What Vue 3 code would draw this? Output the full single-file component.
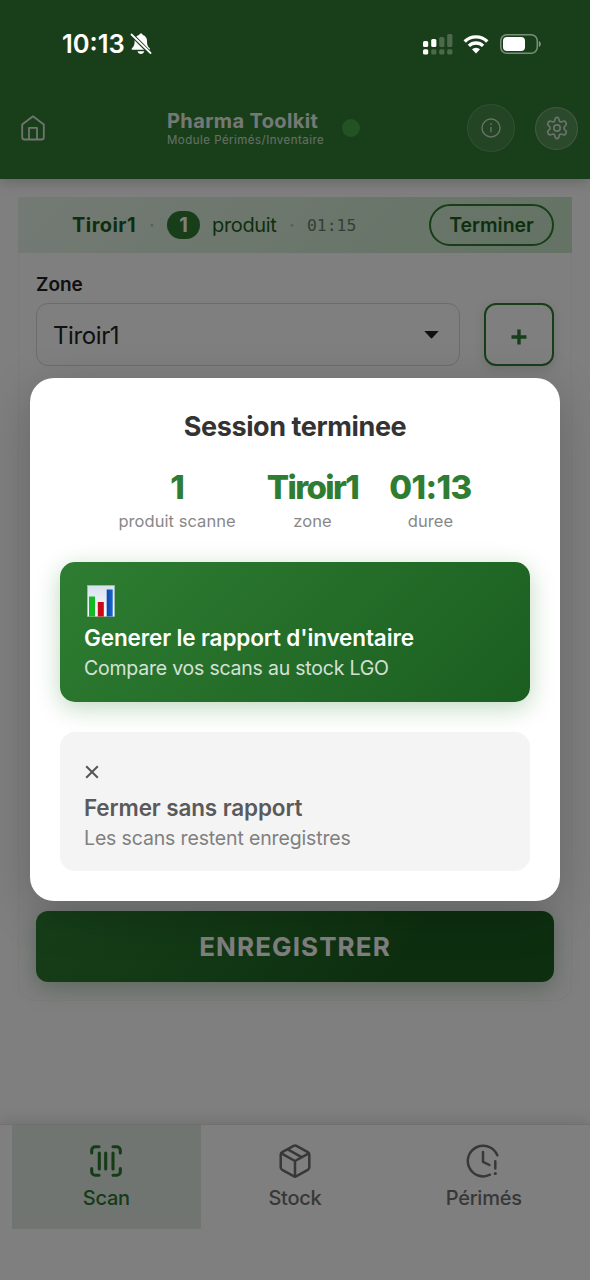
<script setup>
const stats = [
  { value: '1', label: 'produit scanne', kind: 'count' },
  { value: 'Tiroir1', label: 'zone', kind: 'zone' },
  { value: '01:13', label: 'duree', kind: 'time' },
]
</script>

<template>
  <div class="screen">
    <header class="header">
      <div class="status">
        <div class="status-left">
          <span class="clock">10:13</span>
          <svg class="bell" width="22" height="22" viewBox="0 0 22 22">
            <path fill="#fff" d="M11 .6c1 0 1.700.7 1.800 1.500 2.700.8 4.200 3 4.200 5.800 0 4.200 1 5.600 2.500 7 .8.800.5 1.900-.7 1.900H2.800c-1.300 0-1.600-1.100-.7-1.900 1.500-1.400 2.500-2.800 2.500-7 0-2.800 1.600-5 4.500-5.800C9.300 1.300 10 .6 11 .6zM7.500 18.300h6.800c-.5 1.700-1.800 2.700-3.400 2.700s-2.900-1-3.400-2.700z" />
            <path stroke="#193f1a" stroke-width="4" d="M0 0l22 22" />
            <path stroke="#fff" stroke-width="1.800" stroke-linecap="round" d="M1.500 1.500l19 18.500" />
          </svg>
        </div>
        <div class="status-right">
          <svg width="30" height="21" viewBox="0 0 30 21" fill="#fff">
            <rect x="0" y="7" width="5.200" height="6" rx="1.500" />
            <rect x="0" y="15.300" width="5.200" height="5.200" rx="1.500" />
            <rect x="8.200" y="5" width="5.200" height="8" rx="1.500" />
            <g opacity=".22">
              <rect x="16.200" y="3" width="5.200" height="10" rx="1.500" />
              <rect x="24.200" y="0" width="5.200" height="13" rx="1.500" />
              <rect x="8.200" y="15.300" width="5.200" height="5.200" rx="1.500" />
              <rect x="16.200" y="15.300" width="5.200" height="5.200" rx="1.500" />
              <rect x="24.200" y="15.300" width="5.200" height="5.200" rx="1.500" />
            </g>
          </svg>
          <svg class="wifi" width="26" height="20" viewBox="0 0 26 20" fill="none" stroke="#fff" stroke-width="3.300">
            <path d="M1.700 7.500a16 16 0 0 1 22.600 0" />
            <path d="M5.900 11.900a10.200 10.200 0 0 1 14.200 0" />
            <path fill="#fff" stroke="none" d="M13 19.500l-4-4.200a5.800 5.800 0 0 1 8 0z" />
          </svg>
          <svg class="battery" width="42" height="20" viewBox="0 0 42 20">
            <rect x=".75" y=".75" width="36.500" height="18.500" rx="6" fill="none" stroke="#fff" stroke-opacity=".42" stroke-width="1.500" />
            <rect x="3" y="3" width="22" height="14" rx="4" fill="#fff" />
            <path d="M38.800 7c1.300.5 2 1.600 2 3s-.7 2.500-2 3z" fill="#fff" fill-opacity=".45" />
          </svg>
        </div>
      </div>
      <div class="toolbar">
        <svg class="home" width="24" height="26" viewBox="0 0 24 26" fill="none" stroke="currentColor" stroke-width="1.800" stroke-linejoin="round">
          <path d="M1.200 9.500L12 1.300l10.800 8.200v12.700a2.300 2.300 0 0 1-2.300 2.300h-17a2.300 2.300 0 0 1-2.300-2.300z" />
          <path d="M8 24.500V12.800h8v11.700" />
        </svg>
        <div class="brand">
          <div class="brand-name">Pharma Toolkit</div>
          <div class="brand-sub">Module Périmés/Inventaire</div>
        </div>
        <span class="dot"></span>
        <span class="round info">
          <svg width="20" height="20" viewBox="0 0 20 20" fill="none" stroke="currentColor" stroke-width="1.400">
            <circle cx="10" cy="10" r="9" />
            <path d="M10 9v5.200M10 5.300v1.700" />
          </svg>
        </span>
        <span class="round gear">
          <svg width="22" height="24" viewBox="0 0 22 24" fill="none" stroke="currentColor" stroke-width="1.700" stroke-linejoin="round">
            <path d="M9.200 2.700a1.850 1.850 0 0 1 3.600 0l.45 1.700a1.800 1.800 0 0 0 2.500 1.400l1.600-.6a1.850 1.850 0 0 1 2.100.8l.6 1a1.850 1.850 0 0 1-.3 2.300l-1.200 1.200a2.100 2.100 0 0 0 0 3l1.200 1.200a1.850 1.850 0 0 1 .3 2.300l-.6 1a1.850 1.850 0 0 1-2.100.8l-1.600-.6a1.800 1.800 0 0 0-2.500 1.400l-.45 1.700a1.850 1.850 0 0 1-3.600 0l-.45-1.700a1.800 1.800 0 0 0-2.500-1.400l-1.600.6a1.850 1.850 0 0 1-2.100-.8l-.6-1a1.850 1.850 0 0 1 .3-2.300l1.200-1.200a2.100 2.100 0 0 0 0-3L2.250 9.300a1.850 1.850 0 0 1-.3-2.300l.6-1a1.850 1.850 0 0 1 2.100-.8l1.600.6a1.800 1.800 0 0 0 2.500-1.400z" />
            <circle cx="11" cy="12" r="3.200" />
          </svg>
        </span>
      </div>
    </header>

    <main class="main">
      <section class="session">
        <span class="session-zone">Tiroir1</span>
        <span class="sep">·</span>
        <span class="badge">1</span>
        <span class="session-unit">produit</span>
        <span class="sep sep-two">·</span>
        <span class="timer">01:15</span>
        <button class="finish">Terminer</button>
      </section>
      <section class="card">
        <div class="label">Zone</div>
        <div class="zone-row">
          <div class="select">
            <span>Tiroir1</span>
            <svg width="15" height="8" viewBox="0 0 15 8"><path d="M.3 0h14.400L8.300 7a1.100 1.100 0 0 1-1.600 0z" fill="#212121" /></svg>
          </div>
          <button class="add">
            <svg width="16" height="16" viewBox="0 0 16 16"><path d="M8 .5v15M.5 8h15" stroke="#2e7d32" stroke-width="3.400" /></svg>
          </button>
        </div>
        <button class="save">ENREGISTRER</button>
      </section>
    </main>

    <nav class="nav">
      <div class="tab active">
        <svg width="32" height="32" viewBox="0 0 32 32" fill="none" stroke="currentColor" stroke-width="3.100" stroke-linecap="round">
          <path d="M1.700 8V5.200a3.500 3.500 0 0 1 3.500-3.500H9M23 1.700h3.800a3.500 3.500 0 0 1 3.500 3.500V8M30.300 23.500v3.300a3.500 3.500 0 0 1-3.500 3.500H23M9 30.300H5.200a3.500 3.500 0 0 1-3.500-3.500v-3.300M9.300 8v16M15.700 8v16M23 8v16" />
        </svg>
        <span>Scan</span>
      </div>
      <div class="tab">
        <svg width="32" height="34" viewBox="0 0 32 34" fill="none" stroke="currentColor" stroke-width="2.500" stroke-linejoin="round" stroke-linecap="round">
          <path d="M14.600 1.800a3 3 0 0 1 2.900 0l11.300 6.300a3 3 0 0 1 1.500 2.600v12.600a3 3 0 0 1-1.500 2.600l-11.300 6.300a3 3 0 0 1-2.900 0L3.200 25.900a3 3 0 0 1-1.500-2.600V10.700a3 3 0 0 1 1.500-2.600z" />
          <path d="M2.300 9.300L16 17l13.700-7.700M16 17v15.500M8.800 5.300l13.700 7.800" />
        </svg>
        <span>Stock</span>
      </div>
      <div class="tab">
        <svg class="clock-alert" width="34" height="34" viewBox="0 0 34 34" fill="none" stroke="currentColor" stroke-width="2.500" stroke-linecap="round" stroke-linejoin="round">
          <path d="M31.300 11.300A15.300 15.300 0 1 0 24 30.700" />
          <path d="M17 8v9.800l6.500 3.200M29.300 17.200v7.300" />
          <circle cx="29.300" cy="29.500" r="1.600" fill="currentColor" stroke="none" />
        </svg>
        <span>Périmés</span>
      </div>
    </nav>

    <div class="overlay">
      <div class="modal">
        <h2>Session terminee</h2>
        <div class="stats">
          <div v-for="s in stats" :key="s.label" class="stat" :class="s.kind">
            <div class="value">{{ s.value }}</div>
            <div class="caption">{{ s.label }}</div>
          </div>
        </div>
        <button class="choice primary">
          <svg class="chart" width="28" height="32" viewBox="0 0 28 32">
            <defs>
              <linearGradient id="sheet" x1="0" y1="0" x2="0" y2="1"><stop offset="0" stop-color="#d8e1ef" /><stop offset="1" stop-color="#fafbfd" /></linearGradient>
              <linearGradient id="blue" x1="0" y1="0" x2="1" y2="0"><stop offset="0" stop-color="#0b47a8" /><stop offset="1" stop-color="#1667d2" /></linearGradient>
            </defs>
            <rect x=".5" y=".5" width="27" height="31" fill="url(#sheet)" stroke="#adc0b8" stroke-width=".6" />
            <rect x="2" y="11.500" width="6" height="20" fill="#12b923" />
            <rect x="10.800" y="17" width="6" height="14.500" fill="#c80918" />
            <rect x="19.700" y="4.500" width="6" height="27" fill="url(#blue)" />
          </svg>
          <span class="choice-title">Generer le rapport d'inventaire</span>
          <span class="choice-sub">Compare vos scans au stock LGO</span>
        </button>
        <button class="choice secondary">
          <svg class="close" width="14" height="14" viewBox="0 0 14 14"><path d="M1.200 1.200l11.600 11.600M12.800 1.200L1.200 12.800" stroke="#555" stroke-width="2" /></svg>
          <span class="choice-title">Fermer sans rapport</span>
          <span class="choice-sub">Les scans restent enregistres</span>
        </button>
      </div>
    </div>
  </div>
</template>

<style>
body {
  margin: 0;
}
</style>

<style scoped>
.screen {
  position: relative;
  display: flex;
  flex-direction: column;
  width: 590px;
  height: 1280px;
  overflow: hidden;
  background: #fefefe;
  color: #212121;
  font-family: Inter, "Liberation Sans", sans-serif;
}
.screen * {
  box-sizing: border-box;
}
svg {
  display: block;
  flex: none;
}
button {
  font: inherit;
  margin: 0;
  padding: 0;
  border: 0;
  background: none;
}
.header {
  height: 179px;
  flex: none;
  background: #327e34;
  box-shadow: 0 3px 12px rgba(0, 0, 0, 0.2);
}
.status {
  position: relative;
  z-index: 3;
  height: 88px;
  padding: 0 48px 0 62px;
  display: flex;
  align-items: center;
  justify-content: space-between;
}
.status-left,
.status-right {
  display: flex;
  align-items: center;
}
.clock {
  font-size: 25.5px;
  font-weight: 600;
  line-height: 30px;
  letter-spacing: 0;
  color: #fff;
}
.bell {
  margin-left: 5px;
}
.wifi {
  margin-left: 10px;
}
.battery {
  margin-left: 11px;
}
.toolbar {
  height: 80px;
  padding: 0 12px 0 21px;
  display: flex;
  align-items: center;
  color: #fff;
}
.home {
  opacity: 0.85;
}
.brand {
  margin-left: 122px;
  padding-top: 2px;
  width: 157px;
  white-space: nowrap;
}
.brand-name {
  font-size: 20px;
  font-weight: 700;
  line-height: 22px;
  letter-spacing: 0.37px;
  opacity: 0.9;
}
.brand-sub {
  margin-top: 1px;
  font-size: 11.5px;
  line-height: 15px;
  letter-spacing: 0.47px;
  opacity: 0.75;
}
.dot {
  width: 18px;
  height: 18px;
  margin-left: 18px;
  border-radius: 50%;
  background: #4caf50;
  opacity: 0.8;
}
.round {
  display: flex;
  align-items: center;
  justify-content: center;
  border-radius: 50%;
  color: rgba(255, 255, 255, 0.75);
}
.info {
  width: 48px;
  height: 48px;
  margin-left: 107px;
  border: 1.5px solid rgba(255, 255, 255, 0.16);
  background: rgba(255, 255, 255, 0.1);
}
.gear {
  width: 43px;
  height: 43px;
  margin-left: 20px;
  border: 1.5px solid rgba(255, 255, 255, 0.28);
  background: rgba(255, 255, 255, 0.18);
}
.main {
  padding: 18px 18px 0;
  flex: 1;
}
.session {
  height: 56px;
  padding: 0 18px 0 54px;
  display: flex;
  align-items: center;
  font-size: 20px;
  color: #1b5e20;
  background: linear-gradient(135deg, #e8f5e9, #c8e6c9);
}
.session-zone {
  width: 65px;
  font-weight: 700;
  letter-spacing: 0.45px;
  white-space: nowrap;
}
.sep {
  width: 6px;
  margin-left: 12px;
  text-align: center;
  color: #a5c3a7;
}
.badge {
  width: 33px;
  height: 28px;
  margin-left: 12px;
  border-radius: 14px;
  background: #2e7d32;
  color: #fff;
  font-size: 20px;
  font-weight: 700;
  line-height: 28px;
  text-align: center;
}
.session-unit {
  width: 65px;
  margin-left: 12px;
  letter-spacing: -0.35px;
  white-space: nowrap;
}
.sep-two {
  margin-left: 12px;
}
.timer {
  margin-left: 12px;
  font-family: "DejaVu Sans Mono", monospace;
  font-size: 16.4px;
  color: #66806a;
}
.finish {
  width: 125px;
  height: 42px;
  margin-left: auto;
  border: 2px solid #2e7d32;
  border-radius: 21px;
  font-size: 19.5px;
  font-weight: 600;
  color: #1b5e20;
}
.card {
  height: 748px;
  padding: 18px 17px 18px;
  display: flex;
  flex-direction: column;
  border: 1px solid #f7f7f7;
  border-top: 0;
  border-radius: 0 0 18px 18px;
}
.label {
  height: 32px;
  padding-top: 2px;
  font-size: 19px;
  font-weight: 600;
  line-height: 24px;
}
.zone-row {
  display: flex;
  gap: 24px;
  height: 63px;
}
.select {
  flex: 1;
  display: flex;
  align-items: center;
  justify-content: space-between;
  padding: 1px 20px 0 16px;
  border: 1.5px solid #d8d8d8;
  border-radius: 12px;
  font-size: 24px;
  letter-spacing: -0.4px;
}
.add {
  width: 70px;
  display: flex;
  align-items: center;
  justify-content: center;
  padding-top: 4px;
  border: 2px solid #2e7d32;
  border-radius: 12px;
  box-shadow: 0 3px 12px rgba(0, 0, 0, 0.12);
}
.save {
  height: 71px;
  margin-top: auto;
  border-radius: 12px;
  background: linear-gradient(135deg, #2e7d32, #226c26 45%, #1b5e20 70%);
  box-shadow: 0 6px 24px rgba(27, 94, 32, 0.3);
  color: #fff;
  font-size: 26px;
  font-weight: 700;
  letter-spacing: 1.1px;
}
.nav {
  height: 156px;
  flex: none;
  display: flex;
  padding: 0 12px;
  border-top: 1px solid #e0e0e0;
  background: #fefefe;
  box-shadow: 0 -3px 15px rgba(0, 0, 0, 0.12);
}
.tab {
  flex: 1;
  height: 104px;
  display: flex;
  flex-direction: column;
  align-items: center;
  color: #707070;
  font-size: 20px;
  font-weight: 500;
  letter-spacing: -0.25px;
}
.tab svg {
  height: 34px;
  margin-top: 19px;
}
.tab .clock-alert {
  margin-right: 2px;
}
.tab span {
  margin-top: 8px;
  line-height: 24px;
}
.tab.active {
  color: #2a762e;
  background: #e3ebe4;
}
.overlay {
  position: absolute;
  inset: 0;
  z-index: 2;
  display: flex;
  align-items: center;
  justify-content: center;
  background: rgba(0, 0, 0, 0.5);
}
.modal {
  width: 530px;
  height: 523px;
  margin-bottom: 1px;
  padding: 31px 30px 30px;
  display: flex;
  flex-direction: column;
  border-radius: 24px;
  background: #fff;
  box-shadow: 0 12px 48px rgba(0, 0, 0, 0.2);
}
h2 {
  margin: 0;
  font-size: 27px;
  font-weight: 700;
  line-height: 36px;
  letter-spacing: -0.4px;
  text-align: center;
  color: #333;
}
.stats {
  display: flex;
  justify-content: center;
  gap: 31px;
  margin-top: 23px;
  height: 94px;
  text-align: center;
}
.value {
  font-size: 33px;
  font-weight: 800;
  line-height: 38px;
  letter-spacing: -1.200px;
  color: #2e7d32;
}
.zone .value {
  letter-spacing: -1.6px;
}
.time .value {
  letter-spacing: -0.6px;
}
.caption {
  margin-top: 4px;
  font-size: 16.5px;
  line-height: 22px;
  letter-spacing: 0.05px;
  color: #888;
}
.choice {
  height: 139.5px;
  padding: 23px 24px 0;
  display: flex;
  flex: none;
  flex-direction: column;
  align-items: flex-start;
  border-radius: 15px;
}
.choice-title {
  margin-top: 7px;
  font-size: 22.5px;
  font-weight: 600;
  line-height: 28px;
  letter-spacing: -0.13px;
}
.choice-sub {
  margin-top: 2px;
  font-size: 19.5px;
  line-height: 28px;
  letter-spacing: -0.22px;
}
.primary {
  color: #fff;
  background: linear-gradient(135deg, #2e7d32, #1b5e20);
  box-shadow: 0 6px 24px rgba(46, 125, 50, 0.3);
}
.primary .choice-sub {
  opacity: 0.8;
}
.chart {
  margin-left: 3px;
}
.secondary {
  margin-top: 30px;
  color: #5a5a5a;
  background: #f4f4f4;
}
.close {
  margin: 10px 0 8px 1px;
}
.secondary .choice-sub {
  letter-spacing: -0.15px;
  color: #808080;
}
</style>
